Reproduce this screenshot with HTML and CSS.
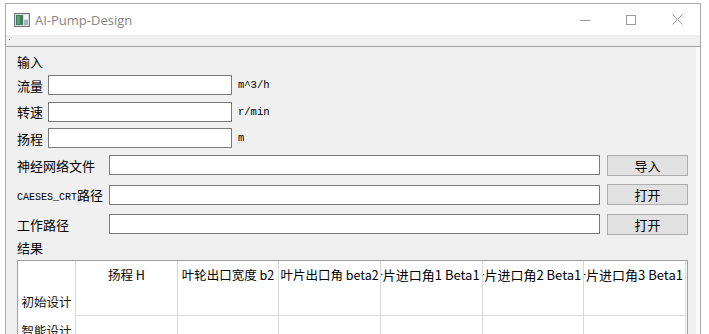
FILE: index.html
```html
<!DOCTYPE html>
<html lang="zh-CN">
<head>
  <meta charset="UTF-8" />
  <title>AI-Pump-Design</title>
  <link rel="stylesheet" href="styles.css">
</head>
<body>
  <div class="window">
    <div class="titlebar">
      <svg class="app-icon" width="16" height="14" viewBox="0 0 16 14">
        <rect x="0.5" y="0.5" width="15" height="13" fill="#d9dde0" stroke="#6d7379"/>
        <rect x="2" y="2" width="7" height="10" fill="#3f7f5b"/>
        <rect x="3" y="3" width="3" height="8" fill="#5aa37a"/>
        <rect x="10" y="2" width="4" height="4" fill="#f4f6f7"/>
        <rect x="10" y="7" width="4" height="5" fill="#a9b3ba"/>
      </svg>
      <span class="title">AI-Pump-Design</span>
      <div class="controls">
        <span class="ctl"><svg width="10" height="10" viewBox="0 0 10 10"><line x1="0" y1="5.5" x2="10" y2="5.5" stroke="#9a9a9a"/></svg></span>
        <span class="ctl"><svg width="10" height="10" viewBox="0 0 10 10"><rect x="0.5" y="0.5" width="9" height="9" fill="none" stroke="#9a9a9a"/></svg></span>
        <span class="ctl"><svg width="11" height="11" viewBox="0 0 11 11"><path d="M0.5 0.5 L10.5 10.5 M10.5 0.5 L0.5 10.5" stroke="#9a9a9a"/></svg></span>
      </div>
    </div>
    <div class="menubar"><span class="grip"></span></div>

    <div class="content">
      <div class="section">输入</div>
      <div class="param-rows">
        <div class="row"><label>流量</label><input class="field short" type="text"><span class="unit">m^3/h</span></div>
        <div class="row"><label>转速</label><input class="field short" type="text"><span class="unit">r/min</span></div>
        <div class="row"><label>扬程</label><input class="field short" type="text"><span class="unit">m</span></div>
      </div>

      <div class="path-rows">
        <div class="row"><label class="wide">神经网络文件</label><input class="field long" type="text"><button class="btn">导入</button></div>
        <div class="row"><label class="wide"><span class="mono">CAESES_CRT</span>路径</label><input class="field long" type="text"><button class="btn">打开</button></div>
        <div class="row"><label class="wide">工作路径</label><input class="field long" type="text"><button class="btn">打开</button></div>
      </div>

      <div class="section result">结果</div>
      <div class="table">
        <div class="corner"></div>
        <div class="hcell"><span>扬程 H</span></div>
        <div class="hcell"><span>叶轮出口宽度 b2</span></div>
        <div class="hcell"><span>叶片出口角 beta2</span></div>
        <div class="hcell end"><span>叶片进口角1 Beta1</span></div>
        <div class="hcell end"><span>叶片进口角2 Beta1</span></div>
        <div class="hcell end"><span>叶片进口角3 Beta1</span></div>

        <div class="vcell">初始设计</div>
        <div class="cell"></div><div class="cell"></div><div class="cell"></div>
        <div class="cell"></div><div class="cell"></div><div class="cell"></div>

        <div class="vcell">智能设计</div>
        <div class="cell"></div><div class="cell"></div><div class="cell"></div>
        <div class="cell"></div><div class="cell"></div><div class="cell"></div>
      </div>
    </div>
  </div>
</body>
</html>
```

FILE: styles.css
```css
body {
  margin: 0;
  background: #fff;
  font-family: "Noto Sans CJK SC", sans-serif;
  font-size: 13px;
  color: #000;
  overflow: hidden;
}
.window {
  margin: 3px 0 0 5px;
  width: 696px;
  box-sizing: border-box;
  border: 1px solid #aaaaaa;
  border-bottom: none;
}
.titlebar {
  height: 31px;
  background: #fff;
  display: flex;
  align-items: center;
}
.app-icon {
  margin-left: 8px;
  flex: none;
}
.title {
  margin-left: 5px;
  font-family: "Open Sans", sans-serif;
  font-size: 13px;
  color: #858585;
}
.controls {
  margin-left: auto;
  display: flex;
  height: 100%;
}
.ctl {
  width: 46px;
  display: flex;
  align-items: center;
  justify-content: center;
}
.menubar {
  height: 11px;
  background: #f0f0f0;
  border-bottom: 1px solid #a0a0a0;
  position: relative;
}
.grip {
  position: absolute;
  left: 3px;
  top: 4px;
  width: 1px;
  height: 1px;
  background: #888;
}
.content {
  background: #f0f0f0;
  padding: 6px 0 0 11px;
  border-right: 4px solid #fbfbfb;
  height: 300px;
}
.section {
  line-height: 18px;
  height: 18px;
}
.param-rows {
  margin-top: 4px;
  display: flex;
  flex-direction: column;
  gap: 6.5px;
}
.row {
  display: flex;
  align-items: center;
  height: 20px;
}
.row label {
  width: 31px;
  flex: none;
  white-space: nowrap;
}
.row label.wide {
  width: 92px;
}
.field {
  box-sizing: border-box;
  height: 20px;
  margin: 0;
  border: 1px solid #7a7a7a;
  background: #fff;
  padding: 0 3px;
  flex: none;
}
.field.short {
  width: 184px;
}
.field.long {
  width: 491px;
}
.unit, .mono {
  font-family: "Liberation Mono", monospace;
  font-size: 10.5px;
}
.unit {
  margin-left: 6px;
}
.mono {
  font-size: 10px;
}
.path-rows {
  margin-top: 7px;
  display: flex;
  flex-direction: column;
  gap: 9.5px;
}
.btn {
  margin-left: 7px;
  width: 81px;
  height: 21px;
  box-sizing: border-box;
  border: 1px solid #adadad;
  background: #e1e1e1;
  font-family: "Noto Sans CJK SC", sans-serif;
  font-size: 13px;
  color: #000;
  padding: 0;
}
.section.result {
  margin-top: 5px;
}
.table {
  margin-top: 3px;
  width: 671px;
  height: 120px;
  box-sizing: border-box;
  border: 1px solid #a0a0a0;
  background: #fff;
  display: grid;
  grid-template-columns: 58px repeat(6, 101.67px);
  grid-template-rows: 26px 29px 29px;
  font-size: 12.5px;
}
.corner, .vcell {
  border-right: 1px solid #dadada;
}
.vcell {
  display: flex;
  align-items: center;
  justify-content: center;
  white-space: nowrap;
  color: #111;
}
.hcell {
  border-right: 1px solid #dadada;
  display: flex;
  align-items: center;
  justify-content: center;
  overflow: hidden;
  white-space: nowrap;
}
.hcell.end {
  justify-content: flex-end;
  padding-right: 2px;
  font-size: 13px;
}
.hcell span {
  flex: none;
}
.cell {
  border-right: 1px solid #dadada;
  border-bottom: 1px solid #dadada;
}
```
